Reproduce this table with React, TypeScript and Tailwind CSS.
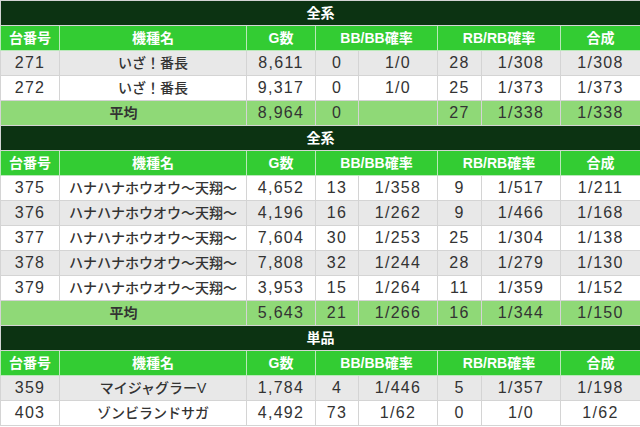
import React from "react";

type Row = { no: string; name: string; g: string; bb: string; bbr: string; rb: string; rbr: string; total: string; gray: boolean };
type Avg = { g: string; bb: string; bbr: string; rb: string; rbr: string; total: string };
type Section = { title: string; rows: Row[]; avg?: Avg };

const sections: Section[] = [
  {
    title: "全系",
    rows: [
      { no: "271", name: "いざ！番長", g: "8,611", bb: "0", bbr: "1/0", rb: "28", rbr: "1/308", total: "1/308", gray: true },
      { no: "272", name: "いざ！番長", g: "9,317", bb: "0", bbr: "1/0", rb: "25", rbr: "1/373", total: "1/373", gray: false },
    ],
    avg: { g: "8,964", bb: "0", bbr: "", rb: "27", rbr: "1/338", total: "1/338" },
  },
  {
    title: "全系",
    rows: [
      { no: "375", name: "ハナハナホウオウ～天翔～", g: "4,652", bb: "13", bbr: "1/358", rb: "9", rbr: "1/517", total: "1/211", gray: false },
      { no: "376", name: "ハナハナホウオウ～天翔～", g: "4,196", bb: "16", bbr: "1/262", rb: "9", rbr: "1/466", total: "1/168", gray: true },
      { no: "377", name: "ハナハナホウオウ～天翔～", g: "7,604", bb: "30", bbr: "1/253", rb: "25", rbr: "1/304", total: "1/138", gray: false },
      { no: "378", name: "ハナハナホウオウ～天翔～", g: "7,808", bb: "32", bbr: "1/244", rb: "28", rbr: "1/279", total: "1/130", gray: true },
      { no: "379", name: "ハナハナホウオウ～天翔～", g: "3,953", bb: "15", bbr: "1/264", rb: "11", rbr: "1/359", total: "1/152", gray: false },
    ],
    avg: { g: "5,643", bb: "21", bbr: "1/266", rb: "16", rbr: "1/344", total: "1/150" },
  },
  {
    title: "単品",
    rows: [
      { no: "359", name: "マイジャグラーV", g: "1,784", bb: "4", bbr: "1/446", rb: "5", rbr: "1/357", total: "1/198", gray: true },
      { no: "403", name: "ゾンビランドサガ", g: "4,492", bb: "73", bbr: "1/62", rb: "0", rbr: "1/0", total: "1/62", gray: false },
    ],
  },
];

const font = { fontFamily: '"Liberation Sans", Arial, "Noto Sans CJK JP", sans-serif' };

function Td({ children, className = "", colSpan }: { children?: React.ReactNode; className?: string; colSpan?: number }) {
  return (
    <td colSpan={colSpan} className={`h-[25px] p-0 text-center align-middle border border-[#d4d4d4] text-[#333] ${className}`}>
      {children}
    </td>
  );
}

function Num({ children }: { children?: React.ReactNode }) {
  return <Td className="text-[16px] tracking-[1.3px]">{children}</Td>;
}

function Th({ children, colSpan }: { children: React.ReactNode; colSpan?: number }) {
  return (
    <th colSpan={colSpan} className="h-[25px] p-0 text-center align-middle border border-[#b9e8b9] bg-[#33cc33] text-white text-[14px] font-bold">
      {children}
    </th>
  );
}

export default function App() {
  return (
    <div className="w-[640px] h-[427px] bg-white overflow-hidden" style={font}>
      <table className="w-[640px] border-collapse table-fixed border border-[#d4d4d4]">
        <colgroup>
          <col className="w-[59px]" />
          <col className="w-[187px]" />
          <col className="w-[69px]" />
          <col className="w-[43px]" />
          <col className="w-[79px]" />
          <col className="w-[44px]" />
          <col className="w-[79px]" />
          <col className="w-[80px]" />
        </colgroup>
        <tbody>
          {sections.map((s, si) => (
            <React.Fragment key={si}>
              <tr>
                <th colSpan={8} className="h-[25px] p-0 text-center align-middle bg-[#0c3312] text-white text-[14px] font-bold border border-[#d4d4d4]">
                  {s.title}
                </th>
              </tr>
              <tr>
                <Th>台番号</Th>
                <Th>機種名</Th>
                <Th>G数</Th>
                <Th colSpan={2}>BB/BB確率</Th>
                <Th colSpan={2}>RB/RB確率</Th>
                <Th>合成</Th>
              </tr>
              {s.rows.map((r, ri) => (
                <tr key={ri} className={r.gray ? "bg-[#e8e8e8]" : "bg-white"}>
                  <Num>{r.no}</Num>
                  <Td className="text-[14px] font-medium">{r.name}</Td>
                  <Num>{r.g}</Num>
                  <Num>{r.bb}</Num>
                  <Num>{r.bbr}</Num>
                  <Num>{r.rb}</Num>
                  <Num>{r.rbr}</Num>
                  <Num>{r.total}</Num>
                </tr>
              ))}
              {s.avg && (
                <tr className="bg-[#8fd977]">
                  <Td colSpan={2} className="font-bold text-[14px] text-[#2a2a2a]">平均</Td>
                  <Num>{s.avg.g}</Num>
                  <Num>{s.avg.bb}</Num>
                  <Num>{s.avg.bbr}</Num>
                  <Num>{s.avg.rb}</Num>
                  <Num>{s.avg.rbr}</Num>
                  <Num>{s.avg.total}</Num>
                </tr>
              )}
            </React.Fragment>
          ))}
        </tbody>
      </table>
    </div>
  );
}
